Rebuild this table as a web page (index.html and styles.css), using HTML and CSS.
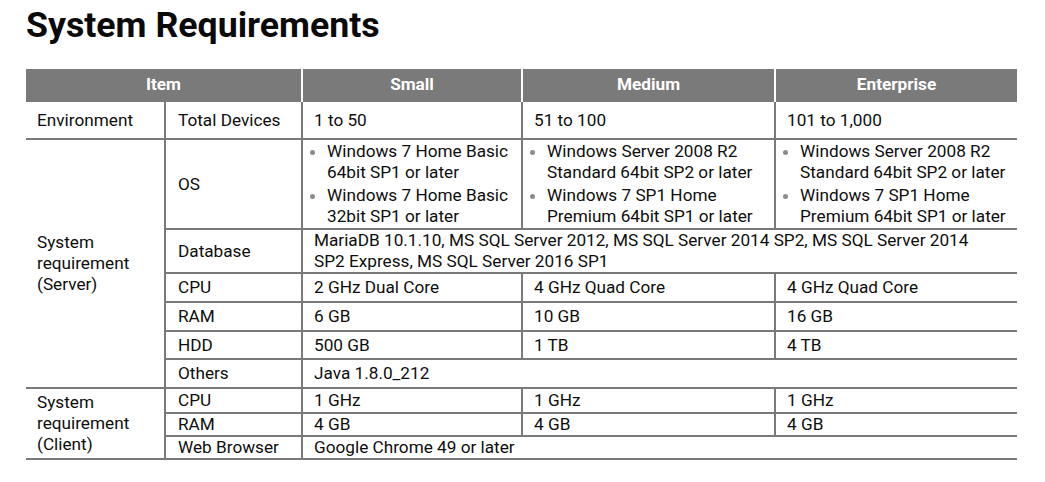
FILE: index.html
```html
<!DOCTYPE html>
<html>
<head>
<meta charset="utf-8">
<title>System Requirements</title>
<link rel="stylesheet" href="styles.css">
</head>
<body>
<h1 class="title">System Requirements</h1>
<table class="req">
  <colgroup>
    <col class="c1"><col class="c2"><col class="c3"><col class="c4"><col class="c5">
  </colgroup>
  <thead>
    <tr class="r-head"><th colspan="2">Item</th><th>Small</th><th>Medium</th><th>Enterprise</th></tr>
  </thead>
  <tbody>
    <tr class="r-env">
      <td class="grp">Environment</td><td class="item">Total Devices</td>
      <td>1 to 50</td><td>51 to 100</td><td>101 to 1,000</td>
    </tr>
    <tr class="r-os">
      <td class="grp" rowspan="6">System<br>requirement<br>(Server)</td>
      <td class="item">OS</td>
      <td class="list"><ul><li>Windows 7 Home Basic 64bit SP1 or later</li><li>Windows 7 Home Basic 32bit SP1 or later</li></ul></td>
      <td class="list"><ul><li>Windows Server 2008 R2 Standard 64bit SP2 or later</li><li>Windows 7 SP1 Home Premium 64bit SP1 or later</li></ul></td>
      <td class="list"><ul><li>Windows Server 2008 R2 Standard 64bit SP2 or later</li><li>Windows 7 SP1 Home Premium 64bit SP1 or later</li></ul></td>
    </tr>
    <tr class="r-db">
      <td class="item">Database</td>
      <td colspan="3">MariaDB 10.1.10, MS SQL Server 2012, MS SQL Server 2014 SP2, MS SQL Server 2014<br>SP2 Express, MS SQL Server 2016 SP1</td>
    </tr>
    <tr class="r-cpu"><td class="item">CPU</td><td>2 GHz Dual Core</td><td>4 GHz Quad Core</td><td>4 GHz Quad Core</td></tr>
    <tr class="r-ram"><td class="item">RAM</td><td>6 GB</td><td>10 GB</td><td>16 GB</td></tr>
    <tr class="r-hdd"><td class="item">HDD</td><td>500 GB</td><td>1 TB</td><td>4 TB</td></tr>
    <tr class="r-oth"><td class="item">Others</td><td colspan="3">Java 1.8.0_212</td></tr>
    <tr class="r-ccpu">
      <td class="grp client" rowspan="3">System<br>requirement<br>(Client)</td>
      <td class="item">CPU</td><td>1 GHz</td><td>1 GHz</td><td>1 GHz</td>
    </tr>
    <tr class="r-cram"><td class="item">RAM</td><td>4 GB</td><td>4 GB</td><td>4 GB</td></tr>
    <tr class="r-cweb"><td class="item">Web Browser</td><td colspan="3">Google Chrome 49 or later</td></tr>
  </tbody>
</table>
</body>
</html>
```

FILE: styles.css
```css
html, body {
  margin: 0;
  padding: 0;
  background: #ffffff;
}

body {
  font-family: Roboto, "Liberation Sans", sans-serif;
  color: #0e0e0e;
}

.title {
  margin: 5px 0 24px 26px;
  font-size: 35.7px;
  line-height: 40px;
  font-weight: 700;
  color: #0a0a0a;
}

.req {
  margin-left: 26px;
  width: 991px;
  border-collapse: collapse;
  table-layout: fixed;
  font-size: 17.2px;
  line-height: 21px;
}

.c1 { width: 139px; }
.c2 { width: 137px; }
.c3 { width: 220px; }
.c4 { width: 253px; }
.c5 { width: 242px; }

.req th {
  background: #7a7a7a;
  color: #ffffff;
  font-weight: 700;
  height: 31px;
  padding: 0;
  text-align: center;
  vertical-align: middle;
  border-left: 2px solid #ffffff;
}

.req th:first-child {
  border-left: none;
}

.req td {
  padding: 0 8px 0 11px;
  border: 2px solid #7a7a7a;
  vertical-align: middle;
  text-align: left;
}

.req td.grp {
  border-left: none;
  padding-left: 11px;
}

.req td:last-child {
  border-right: none;
}

.req td.item {
  padding-left: 12px;
}

.r-env td { height: 36px; }
.r-os td { height: 88px; }
.r-db td { height: 41px; }
.r-cpu td { height: 27px; }
.r-ram td { height: 27px; }
.r-hdd td { height: 26px; }
.r-oth td { height: 27px; }
.r-ccpu td { height: 23px; }
.r-cram td { height: 21px; }
.r-cweb td { height: 21px; }

.req td.list {
  padding-left: 6px;
  padding-right: 2px;
}

.list ul {
  margin: 0;
  padding: 0;
  list-style: none;
}

.list li {
  display: flex;
  align-items: flex-start;
}

.list li + li {
  margin-top: 2px;
}

.list li::before {
  content: "";
  flex: 0 0 5px;
  width: 5px;
  height: 5px;
  margin: 9px 12px 0 1px;
  border-radius: 50%;
  background: #8c8c8c;
}
```
